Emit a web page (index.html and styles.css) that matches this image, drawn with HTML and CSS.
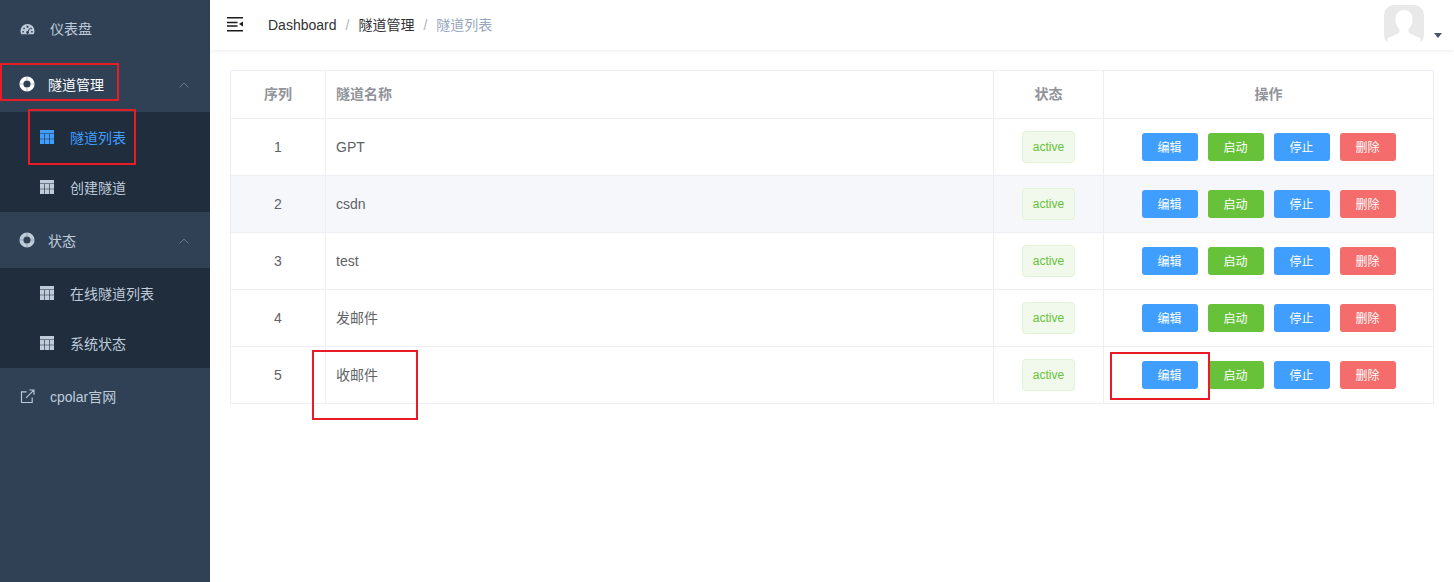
FILE: index.html
```html
<!DOCTYPE html>
<html lang="zh-CN">
<head>
<meta charset="utf-8">
<title>隧道列表</title>
<link rel="stylesheet" href="styles.css">
</head>
<body>
<svg class="defs" width="0" height="0" aria-hidden="true">
  <symbol id="i-table" viewBox="0 0 14 14"><path fill="currentColor" d="M0 0h14v3.500H0zM0 4h4.300v4.700H0zM4.900 4h4.200v4.700H4.900zM9.700 4H14v4.700H9.700zM0 9.300h4.300V14H0zM4.900 9.300h4.200V14H4.900zM9.700 9.300H14V14H9.700z"/></symbol>
  <symbol id="i-ring" viewBox="0 0 16 16"><circle cx="8" cy="8" r="5.600" fill="none" stroke="currentColor" stroke-width="4"/><path d="M.5 8h3.500M12 8h3.500M8 .5V4M8 12v3.500" stroke="#304156" stroke-width=".6" opacity=".5"/></symbol>
</svg>
<div class="app">
  <aside class="sidebar">
    <a class="item">
      <svg class="ic gauge" viewBox="0 0 16 16"><path fill="currentColor" fill-rule="evenodd" d="M8 2a7.500 7.500 0 0 0-7.500 7.500c0 1.400.4 2.600 1 3.500h13c.6-.9 1-2.100 1-3.500A7.500 7.500 0 0 0 8 2zM7 4h2v2H7zM3.500 6h1.600v1.600H3.500zM11 6h1.600v1.600H11zM2.500 9.500h1.600v1.600H2.500zM11.900 9.500h1.600v1.600h-1.600zM9.800 6.600l.9.500-1.500 3a1.500 1.500 0 1 1-.9-.5z"/></svg>
      <span class="label">仪表盘</span>
    </a>
    <a class="item group active-group">
      <svg class="ic ring"><use href="#i-ring"/></svg>
      <span class="label tight">隧道管理</span>
      <svg class="chev" viewBox="0 0 10 6"><path d="M.5 5.500 5 1l4.500 4.500" fill="none" stroke="currentColor"/></svg>
    </a>
    <div class="sub">
      <a class="sub-item active"><svg class="ic-t"><use href="#i-table"/></svg><span>隧道列表</span></a>
      <a class="sub-item"><svg class="ic-t"><use href="#i-table"/></svg><span>创建隧道</span></a>
    </div>
    <a class="item group">
      <svg class="ic ring"><use href="#i-ring"/></svg>
      <span class="label tight">状态</span>
      <svg class="chev" viewBox="0 0 10 6"><path d="M.5 5.500 5 1l4.500 4.500" fill="none" stroke="currentColor"/></svg>
    </a>
    <div class="sub">
      <a class="sub-item"><svg class="ic-t"><use href="#i-table"/></svg><span>在线隧道列表</span></a>
      <a class="sub-item"><svg class="ic-t"><use href="#i-table"/></svg><span>系统状态</span></a>
    </div>
    <a class="item">
      <svg class="ic" viewBox="0 0 16 16"><path fill="none" stroke="currentColor" stroke-width="1.200" d="M7 3H1.600v11.400H13V9M6.500 9.500 14.500 1.500M10 1.100h4.900V6"/></svg>
      <span class="label">cpolar官网</span>
    </a>
  </aside>
  <main class="main">
    <header class="navbar">
      <svg class="hamburger" viewBox="0 0 16 15"><path d="M0 0h16v1.500H0zM0 4.700h10.500v1.500H0zM0 8.300h10.500v1.500H0zM0 13h16v1.500H0zM16 4.500v5l-4-2.500z" fill="#1a1a1a"/></svg>
      <nav class="crumbs">
        <span class="crumb">Dashboard</span><span class="sep">/</span>
        <span class="crumb cn">隧道管理</span><span class="sep">/</span>
        <span class="crumb cn current">隧道列表</span>
      </nav>
      <div class="user">
        <div class="avatar">
          <svg viewBox="0 0 40 40"><path fill="#fff" d="M20 5c-6 0-8.500 4.500-8.500 9.500 0 4 1.500 7.500 4 10v2.500c-2 2.500-8 4-12 6.500L3 40h34l-.5-6.500c-4-2.500-10-4-12-6.500v-2.500c2.500-2.500 4-6 4-10C28.500 9.500 26 5 20 5z"/></svg>
        </div>
        <span class="caret"></span>
      </div>
    </header>
    <section class="content">
      <table class="grid">
        <colgroup><col class="c1"><col class="c2"><col class="c3"><col class="c4"></colgroup>
        <thead>
          <tr><th>序列</th><th class="left">隧道名称</th><th>状态</th><th>操作</th></tr>
        </thead>
        <tbody>
          <tr><td>1</td><td class="left">GPT</td><td><span class="tag">active</span></td><td><div class="actions"><button class="btn blue">编辑</button><button class="btn green">启动</button><button class="btn blue">停止</button><button class="btn red">删除</button></div></td></tr>
          <tr class="alt"><td>2</td><td class="left">csdn</td><td><span class="tag">active</span></td><td><div class="actions"><button class="btn blue">编辑</button><button class="btn green">启动</button><button class="btn blue">停止</button><button class="btn red">删除</button></div></td></tr>
          <tr><td>3</td><td class="left">test</td><td><span class="tag">active</span></td><td><div class="actions"><button class="btn blue">编辑</button><button class="btn green">启动</button><button class="btn blue">停止</button><button class="btn red">删除</button></div></td></tr>
          <tr><td>4</td><td class="left cn-cell">发邮件</td><td><span class="tag">active</span></td><td><div class="actions"><button class="btn blue">编辑</button><button class="btn green">启动</button><button class="btn blue">停止</button><button class="btn red">删除</button></div></td></tr>
          <tr><td>5</td><td class="left cn-cell">收邮件</td><td><span class="tag">active</span></td><td><div class="actions"><button class="btn blue">编辑</button><button class="btn green">启动</button><button class="btn blue">停止</button><button class="btn red">删除</button></div></td></tr>
        </tbody>
      </table>
    </section>
  </main>
</div>
<div class="mark m1"></div>
<div class="mark m2"></div>
<div class="mark m3"></div>
<div class="mark m4"></div>
</body>
</html>
```
FILE: styles.css
```css
* { box-sizing: border-box; }
html, body { margin: 0; height: 100%; }
body {
  font-family: "Liberation Sans", "Noto Sans CJK SC", sans-serif;
  font-size: 14px;
  color: #606266;
  background: #fff;
  overflow: hidden;
}
.defs { position: absolute; }
.app { display: flex; height: 582px; }

.sidebar { width: 210px; flex: none; background: #304156; color: #bfcbd9; }
.item { display: flex; align-items: center; height: 56px; padding-left: 20px; position: relative; }
.ic { width: 15px; height: 15px; flex: none; color: #bfcbd9; }
.ic.gauge { margin-top: 2px; }
.ic.ring { width: 16px; height: 16px; margin-left: -1px; }
.label { margin-left: 15px; }
.label.tight { margin-left: 13px; }
.group .chev { position: absolute; left: 179px; top: 26px; width: 10px; height: 6px; color: #6a7888; }
.active-group, .active-group .ic { color: #fff; }
.sub { background: #1f2d3d; }
.sub-item { display: flex; align-items: center; height: 50px; padding-left: 40px; }
.sub-item span { margin-left: 16px; }
.ic-t { width: 14px; height: 14px; flex: none; color: #bfcbd9; }
.sub-item.active, .sub-item.active .ic-t { color: #409eff; }

.main { flex: 1; min-width: 0; }
.navbar { display: flex; align-items: center; height: 50px; padding-left: 17px; box-shadow: 0 1px 4px rgba(0, 21, 41, .08); position: relative; }
.hamburger { width: 16px; height: 15px; flex: none; margin-top: -1px; }
.crumbs { margin-left: 25px; display: flex; align-items: center; margin-top: -1px; }
.crumb { color: #303133; }
.crumb.cn { padding-bottom: 2px; }
.crumb.current { color: #97a8be; }
.sep { margin: 0 9px; color: #b0b4bb; }
.user { margin-left: auto; display: flex; align-items: flex-start; height: 50px; padding-top: 5px; }
.avatar { width: 40px; height: 40px; border-radius: 10px; overflow: hidden; background: #e9e9e9; }
.avatar svg { display: block; width: 40px; height: 40px; }
.caret { width: 0; height: 0; margin: 28px 12px 0 10px; border: 4px solid transparent; border-top: 5px solid #4a5568; border-bottom: 0; }

.content { padding: 20px 20px 0; }
.grid { width: 1203px; table-layout: fixed; border-collapse: collapse; border: 1px solid #ebeef5; }
.c1 { width: 95px; }
.c2 { width: 668px; }
.c3 { width: 110px; }
.c4 { width: 330px; }
.grid th, .grid td { border: 1px solid #ebeef5; text-align: center; padding: 0 10px; }
.grid th { height: 48px; padding-bottom: 4px; color: #909399; font-weight: 700; font-size: 14px; }
.grid td { height: 57px; color: #606266; }
.grid td.cn-cell { padding-bottom: 2px; }
.grid .left { text-align: left; }
.alt td { background: #f5f7fa; }
.tag { display: inline-block; width: 53px; height: 32px; line-height: 30px; font-size: 12px; color: #67c23a; background: #f0f9eb; border: 1px solid #e1f3d8; border-radius: 4px; vertical-align: middle; }
.actions { display: flex; justify-content: center; gap: 10px; }
.btn { width: 56px; height: 28px; padding: 0 0 2px; border: 0; border-radius: 3px; color: #fff; font: 12px "Liberation Sans", "Noto Sans CJK SC", sans-serif; }
.blue { background: #409eff; }
.green { background: #67c23a; }
.red { background: #f56c6c; }

.mark { position: absolute; border: 2px solid #e81c24; pointer-events: none; }
.m1 { left: 0; top: 63px; width: 119px; height: 38px; }
.m2 { left: 28px; top: 109px; width: 108px; height: 56px; }
.m3 { left: 312px; top: 350px; width: 106px; height: 70px; }
.m4 { left: 1110px; top: 352px; width: 100px; height: 48px; }
```
